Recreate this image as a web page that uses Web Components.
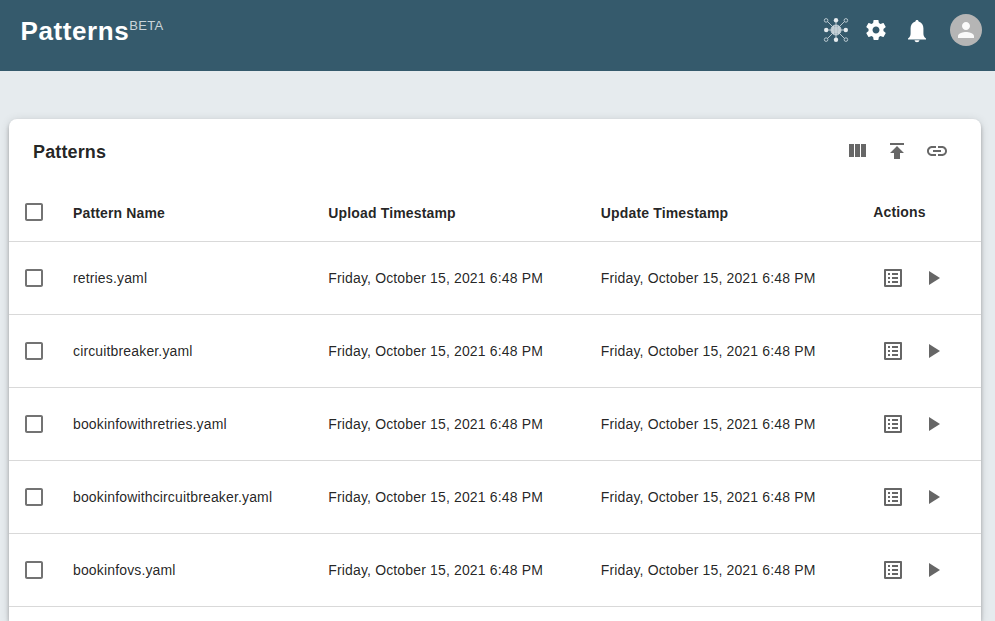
<!DOCTYPE html>
<html lang="en"><head><meta charset="utf-8"><title>Patterns</title>
<style>
html,body{margin:0;height:100%;overflow:hidden}
body{background:#e6ebee;color:rgba(0,0,0,.87);font-family:"Liberation Sans",Arial,sans-serif}
</style></head><body>
<patterns-page></patterns-page>
<script>
const define=(name,css,html)=>customElements.define(name,class extends HTMLElement{
  constructor(){super();this.attachShadow({mode:'open'}).innerHTML=`<style>*{box-sizing:border-box}${css}</style>${typeof html==='function'?html(this):html}`}
});
const icons={
 columns:'M10 18h5V5h-5v13zm-6 0h5V5H4v13zM16 5v13h5V5h-5z',
 upload:'M5 4v2h14V4H5zm0 10h4v6h6v-6h4l-7-7-7 7z',
 link:'M3.9 12c0-1.71 1.39-3.1 3.1-3.1h4V7H7c-2.76 0-5 2.24-5 5s2.24 5 5 5h4v-1.9H7c-1.71 0-3.1-1.39-3.1-3.1zM8 13h8v-2H8v2zm9-6h-4v1.9h4c1.71 0 3.1 1.39 3.1 3.1s-1.39 3.1-3.1 3.1h-4V17h4c2.76 0 5-2.24 5-5s-2.24-5-5-5z',
 list:'M19 5v14H5V5h14m1.1-2H3.9c-.5 0-.9.4-.9.9v16.2c0 .4.4.9.9.9h16.2c.4 0 .9-.5.9-.9V3.9c0-.5-.5-.9-.9-.9zM11 7h6v2h-6V7zm0 4h6v2h-6v-2zm0 4h6v2h-6zM7 7h2v2H7zm0 4h2v2H7zm0 4h2v2H7z',
 play:'M8 5v14l11-7z',
 box:'M19 5v14H5V5h14m0-2H5c-1.1 0-2 .9-2 2v14c0 1.1.9 2 2 2h14c1.1 0 2-.9 2-2V5c0-1.1-.9-2-2-2z',
 person:'M12 12c2.21 0 4-1.79 4-4s-1.79-4-4-4-4 1.79-4 4 1.79 4 4 4zm0 2c-2.67 0-8 1.34-8 4v2h16v-2c0-2.66-5.33-4-8-4z',
 bell:'M9.8 20.7h4.400c-.2 1-1 1.700-2.200 1.700s-2-.7-2.200-1.700zM4 20v-.9c1.700-1 2.300-2.400 2.300-4.600V10c0-3 1.500-5.200 4.300-6.100C10.700 3.100 11.200 2.600 12 2.600s1.300.5 1.400 1.300c2.800.9 4.300 3.100 4.300 6.100v4.500c0 2.200.6 3.600 2.300 4.600v.9z',
 gear:'M19.43 12.98c.04-.32.07-.64.07-.98s-.03-.66-.07-.98l2.110-1.650c.19-.15.24-.42.12-.64l-2-3.460c-.12-.22-.39-.3-.61-.22l-2.490 1c-.52-.4-1.080-.73-1.690-.98l-.38-2.650C14.460 2.180 14.250 2 14 2h-4c-.25 0-.46.18-.49.42l-.38 2.650c-.61.25-1.170.59-1.690.98l-2.490-1c-.23-.09-.49 0-.61.22l-2 3.460c-.13.22-.07.49.12.64l2.110 1.650c-.04.32-.07.65-.07.98s.03.66.07.98l-2.110 1.650c-.19.15-.24.42-.12.64l2 3.460c.12.22.39.3.61.22l2.490-1c.52.4 1.080.73 1.690.98l.38 2.650c.03.24.24.42.49.42h4c.25 0 .46-.18.49-.42l.38-2.650c.61-.25 1.170-.59 1.690-.98l2.490 1c.23.09.49 0 .61-.22l2-3.460c.12-.22.07-.49-.12-.64l-2.110-1.650zM12 15.500c-1.930 0-3.500-1.570-3.500-3.500s1.570-3.500 3.500-3.500 3.500 1.570 3.500 3.500-1.570 3.500-3.500 3.500z'
};
define('ui-icon',':host{display:block;flex:none;width:24px;height:24px}svg{display:block;width:100%;height:100%}',
 el=>`<svg viewBox="0 0 24 24"><path fill="currentColor" d="${icons[el.getAttribute('name')]}"/></svg>`);
define('mesh-icon',':host{display:block;flex:none;width:26px;height:26px}svg{display:block}',
`<svg width="26" height="26" viewBox="0 0 26 26" fill="none" stroke="#c5d1d8" stroke-width=".9">
<path d="M13 3v20M3 13h20M4 4l18 18M22 4L4 22"/>
<g fill="#355a6c"><circle cx="3.100" cy="3.400" r="1.800"/><circle cx="22.900" cy="3.400" r="1.800"/><circle cx="3.100" cy="22.600" r="1.800"/><circle cx="22.900" cy="22.600" r="1.800"/></g>
<g fill="#e5ebee" stroke="none"><circle cx="13" cy="3.300" r="2.200"/><circle cx="13" cy="22.700" r="2.200"/><circle cx="3.200" cy="13" r="2.200"/><circle cx="22.800" cy="13" r="2.200"/></g>
<circle cx="13" cy="13" r="5" fill="#9eb1bb" stroke="#c5d1d8"/><path stroke="#dce4e8" stroke-width=".7" d="M8.500 11h9M8 13h10M8.500 15h9M13 8v10M10.500 9q-1.500 4 0 8M15.500 9q1.500 4 0 8"/></svg>`);
define('app-header',`:host{display:flex;justify-content:space-between;align-items:flex-start;height:71px;background:#355a6c;color:#fff;padding:14px 13px 0 20.500px}
h1{margin:0;display:flex;font-size:26px;line-height:32px;letter-spacing:.6px}
h1 span{padding-top:1px}
sup{font-size:13px;font-weight:400;line-height:14px;padding-top:5px;color:#cad4da;letter-spacing:.25px}
nav{display:flex;align-items:center;height:32px}
.gear{margin-left:15px}.bell{width:28px;height:27px;margin:1px 0 0 15px}
.avatar{width:32px;height:32px;border-radius:50%;background:#b5b5b5;color:#fafafa;padding:4px;margin-left:19px}`,
`<h1><span><slot></slot></span><sup>BETA</sup></h1><nav><mesh-icon></mesh-icon><ui-icon class="gear" name="gear"></ui-icon><ui-icon class="bell" name="bell"></ui-icon><div class="avatar"><ui-icon name="person"></ui-icon></div></nav>`);
define('table-toolbar',`:host{display:flex;align-items:center;justify-content:space-between;height:64px;padding:0 32px 0 24px}
h2{margin:2px 0 0;font-size:18px;line-height:24px;letter-spacing:.14px}div{display:flex;gap:16px;color:#676767}`,
`<h2><slot></slot></h2><div><ui-icon name="columns"></ui-icon><ui-icon name="upload"></ui-icon><ui-icon name="link"></ui-icon></div>`);
define('table-row',`:host{display:grid;grid-template-columns:64px 255.300px 272.500px 272.500px 1fr;align-items:center;height:73px;border-bottom:1px solid #d9d9d9;font-size:14px;line-height:20px;letter-spacing:.15px;white-space:nowrap}
:host([head]){height:59px;font-weight:700}.check{margin-left:13px;color:#737373}
:host([head]) ::slotted(span){padding-top:2px}:host([head]) ::slotted(.last){padding-top:0}`,
`<ui-icon class="check" name="box"></ui-icon><slot></slot>`);
define('row-actions',':host{display:flex;gap:16px;color:#666;padding-left:7.700px}','<ui-icon name="list"></ui-icon><ui-icon name="play"></ui-icon>');
define('patterns-card',':host{display:block;flex:1;margin:48px 14px 0 9px;background:#fff;border-radius:8px 8px 0 0;box-shadow:0 2px 4px -1px rgba(0,0,0,.2),0 4px 5px rgba(0,0,0,.14),0 1px 10px rgba(0,0,0,.12)}','<slot></slot>');
const row=n=>`<table-row><span>${n}</span><span>Friday, October 15, 2021 6:48 PM</span><span>Friday, October 15, 2021 6:48 PM</span><row-actions></row-actions></table-row>`;
define('patterns-page',':host{display:flex;flex-direction:column;height:100vh;overflow:hidden}',
`<app-header>Patterns</app-header><patterns-card><table-toolbar>Patterns</table-toolbar><table-row head><span>Pattern Name</span><span>Upload Timestamp</span><span>Update Timestamp</span><span class="last">Actions</span></table-row>${['retries.yaml','circuitbreaker.yaml','bookinfowithretries.yaml','bookinfowithcircuitbreaker.yaml','bookinfovs.yaml'].map(row).join('')}</patterns-card>`);
</script></body></html>
